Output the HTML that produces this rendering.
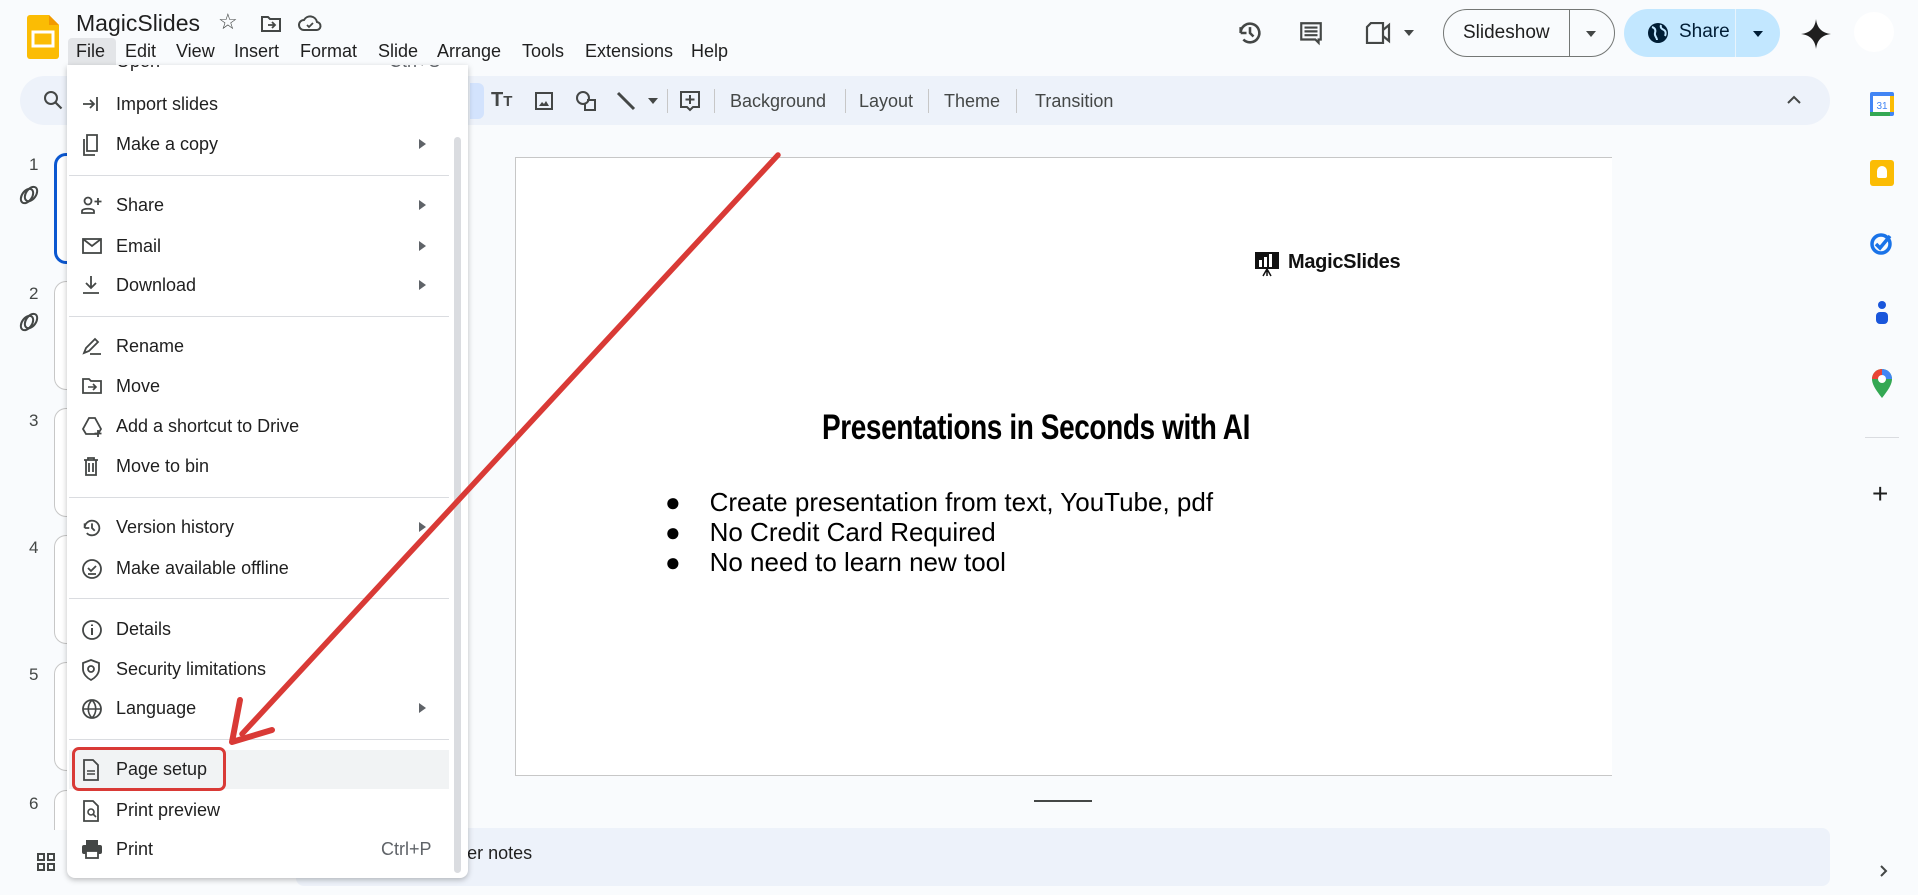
<!DOCTYPE html>
<html><head><meta charset="utf-8"><style>
*{margin:0;padding:0;box-sizing:border-box}
body{width:1918px;height:895px;overflow:hidden;background:#f9fbfd;font-family:"Liberation Sans",Arial,sans-serif;color:#1f1f1f;position:relative}
.a{position:absolute}
.mi{position:absolute;left:0;width:401px;height:40px;font-size:18px;line-height:40px}
.mi span.t{position:absolute;left:49px}
.mi svg{position:absolute;left:14px;top:10px}
.mi .ar{position:absolute;left:352px;top:15px;width:0;height:0;border-left:7px solid #5f6368;border-top:5px solid transparent;border-bottom:5px solid transparent}
.sep{position:absolute;left:2px;width:380px;height:1px;background:#dadce0}
.tb{font-size:18px;color:#444746;top:91px}
.vs{position:absolute;top:89px;width:1px;height:24px;background:#c7c7c7}
.num{font-size:17px;color:#444746;left:29px}
.th{position:absolute;left:54px;width:30px;border:1px solid #c7c7c7;border-right:none;border-radius:12px 0 0 12px;background:#fff}
.si{position:absolute;left:1870px}
.mb{position:absolute;top:41px;font-size:18px;white-space:nowrap}
</style></head><body>
<!-- logo -->
<svg class="a" style="left:27px;top:15px" width="32" height="44" viewBox="0 0 32 44"><path d="M0 3a3 3 0 0 1 3-3h19l10 10v31a3 3 0 0 1-3 3H3a3 3 0 0 1-3-3z" fill="#fbbc04"/><path d="M22 0l10 10H22z" fill="#f29900"/><rect x="6" y="17" width="20" height="14" fill="none" stroke="#fff" stroke-width="3"/></svg>
<div class="a" style="left:76px;top:10px;font-size:23px;color:#1f1f1f">MagicSlides</div>
<div class="a" style="left:218px;top:9px;font-size:22px;color:#444746">☆</div>
<svg class="a" style="left:260px;top:14px" width="22" height="20" viewBox="0 0 22 20"><path d="M2 3h6l2 2h10v12H2z" fill="none" stroke="#444746" stroke-width="2"/><path d="M8 11h6m-2-3l3 3-3 3" fill="none" stroke="#444746" stroke-width="1.8"/></svg>
<svg class="a" style="left:298px;top:14px" width="24" height="18" viewBox="0 0 24 18"><path d="M6 16a5 5 0 0 1 0-10 7 7 0 0 1 13 2 4 4 0 0 1-1 8z" fill="none" stroke="#444746" stroke-width="2"/><path d="M9 11l2 2 4-4" fill="none" stroke="#444746" stroke-width="1.8"/></svg>
<div class="a" style="left:68px;top:38px;width:48px;height:28px;background:#e3e5e8;border-radius:4px 4px 0 0"></div>
<div class="mb" style="left:76px">File</div>
<div class="mb" style="left:125px">Edit</div>
<div class="mb" style="left:176px">View</div>
<div class="mb" style="left:234px">Insert</div>
<div class="mb" style="left:300px">Format</div>
<div class="mb" style="left:378px">Slide</div>
<div class="mb" style="left:437px">Arrange</div>
<div class="mb" style="left:522px">Tools</div>
<div class="mb" style="left:585px">Extensions</div>
<div class="mb" style="left:691px">Help</div>

<!-- header right -->
<svg class="a" style="left:1236px;top:19px" width="28" height="28" viewBox="0 0 24 24"><path d="M4 12a8 8 0 1 1 2.3 5.6M4 12V7M4 12h5" fill="none" stroke="#444746" stroke-width="2.2"/><path d="M12 7v5l3 3" fill="none" stroke="#444746" stroke-width="2.2"/></svg>
<svg class="a" style="left:1298px;top:20px" width="26" height="26" viewBox="0 0 24 24"><path d="M3 3h18v15h-2v3l-3-3H3z" fill="none" stroke="#444746" stroke-width="2"/><path d="M6 7h12M6 10.5h12M6 14h12" stroke="#444746" stroke-width="2"/></svg>
<svg class="a" style="left:1365px;top:22px" width="30" height="22" viewBox="0 0 30 22"><path d="M2 5l4-4h12v20H2z" fill="none" stroke="#444746" stroke-width="2.2"/><path d="M18 8l6-5v16l-6-5" fill="none" stroke="#444746" stroke-width="2.2"/></svg>
<div class="a" style="left:1404px;top:30px;border-top:6px solid #444746;border-left:5px solid transparent;border-right:5px solid transparent"></div>
<div class="a" style="left:1443px;top:9px;width:172px;height:48px;border:1.5px solid #747775;border-radius:24px;background:#f9fbfd"></div>
<div class="a" style="left:1569px;top:10px;width:1px;height:46px;background:#747775"></div>
<div class="a" style="left:1463px;top:22px;font-size:19px;color:#1f1f1f">Slideshow</div>
<div class="a" style="left:1586px;top:31px;border-top:6px solid #444746;border-left:5px solid transparent;border-right:5px solid transparent"></div>
<div class="a" style="left:1624px;top:9px;width:156px;height:48px;border-radius:24px;background:#c2e7ff"></div>
<div class="a" style="left:1735px;top:9px;width:1px;height:48px;background:#e8f4fc"></div>
<svg class="a" style="left:1647px;top:22px" width="22" height="22" viewBox="0 0 22 22"><circle cx="11" cy="11" r="10" fill="#001d35"/><path d="M5 5c3 1 4 3 3 6s2 4 2 7M14 3c-1 3 1 4 3 5s2 4 1 6" fill="none" stroke="#c2e7ff" stroke-width="2"/></svg>
<div class="a" style="left:1679px;top:21px;font-size:19px;color:#001d35">Share</div>
<div class="a" style="left:1753px;top:31px;border-top:6px solid #001d35;border-left:5px solid transparent;border-right:5px solid transparent"></div>
<svg class="a" style="left:1801px;top:19px" width="30" height="30" viewBox="0 0 30 30"><path d="M15 0C16 9 21 14 30 15 21 16 16 21 15 30 14 21 9 16 0 15 9 14 14 9 15 0z" fill="#1f1f1f"/></svg>

<!-- toolbar -->
<div class="a" style="left:20px;top:76px;width:1810px;height:49px;border-radius:25px;background:#edf2fa"></div>
<svg class="a" style="left:43px;top:90px" width="22" height="22" viewBox="0 0 22 22"><circle cx="8" cy="8" r="6" fill="none" stroke="#444746" stroke-width="2"/><path d="M12.5 12.5l6 6" stroke="#444746" stroke-width="2.2"/></svg>
<div class="a" style="left:470px;top:83px;width:14px;height:36px;background:#d3e3fd;border-radius:0 6px 6px 0"></div>
<div class="a" style="left:491px;top:89px;font-size:20px;font-weight:bold;color:#444746">T<span style="font-size:15px">T</span></div>
<svg class="a" style="left:534px;top:91px" width="20" height="20" viewBox="0 0 20 20"><rect x="2" y="2" width="16" height="16" fill="none" stroke="#444746" stroke-width="2"/><path d="M5 15l3-4 2 2 2-3 3 5z" fill="#444746"/></svg>
<svg class="a" style="left:574px;top:89px" width="24" height="24" viewBox="0 0 24 24"><circle cx="9" cy="9" r="6" fill="none" stroke="#444746" stroke-width="2"/><path d="M13 11h8v10h-10v-6" fill="none" stroke="#444746" stroke-width="2"/></svg>
<svg class="a" style="left:615px;top:90px" width="22" height="22" viewBox="0 0 22 22"><path d="M3 3l16 16" stroke="#444746" stroke-width="3"/></svg>
<div class="a" style="left:648px;top:98px;border-top:6px solid #444746;border-left:5px solid transparent;border-right:5px solid transparent"></div>
<div class="vs" style="left:667px"></div>
<svg class="a" style="left:678px;top:89px" width="24" height="24" viewBox="0 0 24 24"><path d="M3 3h18v15h-6l-3 3-3-3H3z" fill="none" stroke="#444746" stroke-width="2"/><path d="M12 6v9M7.5 10.5h9" stroke="#444746" stroke-width="2"/></svg>
<div class="vs" style="left:714px"></div>
<div class="a tb" style="left:730px">Background</div>
<div class="vs" style="left:845px"></div>
<div class="a tb" style="left:859px">Layout</div>
<div class="vs" style="left:928px"></div>
<div class="a tb" style="left:944px">Theme</div>
<div class="vs" style="left:1016px"></div>
<div class="a tb" style="left:1035px">Transition</div>
<svg class="a" style="left:1786px;top:94px" width="16" height="12" viewBox="0 0 16 12"><path d="M2 9l6-6 6 6" fill="none" stroke="#444746" stroke-width="2"/></svg>

<!-- thumbnails -->
<div class="a num" style="top:155px">1</div>
<div class="a num" style="top:284px">2</div>
<div class="a num" style="top:411px">3</div>
<div class="a num" style="top:538px">4</div>
<div class="a num" style="top:665px">5</div>
<div class="a num" style="top:794px">6</div>
<div class="th" style="top:153px;height:111px;border:3px solid #0b57d0;border-right:none"></div>
<div class="th" style="top:281px;height:109px"></div>
<div class="th" style="top:408px;height:109px"></div>
<div class="th" style="top:535px;height:109px"></div>
<div class="th" style="top:662px;height:109px"></div>
<div class="th" style="top:790px;height:40px;border-bottom:none;border-radius:12px 0 0 0"></div>
<svg class="a" style="left:18px;top:184px" width="22" height="22" viewBox="0 0 22 22"><g fill="none" stroke="#444746" stroke-width="2"><ellipse cx="9" cy="12" rx="5" ry="8" transform="rotate(35 9 12)"/><ellipse cx="13" cy="10" rx="5" ry="8" transform="rotate(35 13 10)"/></g></svg>
<svg class="a" style="left:18px;top:311px" width="22" height="22" viewBox="0 0 22 22"><g fill="none" stroke="#444746" stroke-width="2"><ellipse cx="9" cy="12" rx="5" ry="8" transform="rotate(35 9 12)"/><ellipse cx="13" cy="10" rx="5" ry="8" transform="rotate(35 13 10)"/></g></svg>
<svg class="a" style="left:36px;top:852px" width="20" height="20" viewBox="0 0 20 20"><g fill="none" stroke="#444746" stroke-width="2"><rect x="2" y="2" width="6" height="6"/><rect x="12" y="2" width="6" height="6"/><rect x="2" y="12" width="6" height="6"/><rect x="12" y="12" width="6" height="6"/></g></svg>

<!-- slide -->
<div class="a" style="left:515px;top:157px;width:1097px;height:619px;background:#fff;border:1px solid #c7c7c7;border-right:none"></div>
<svg class="a" style="left:1254px;top:251px" width="26" height="26" viewBox="0 0 26 26"><rect x="1" y="1" width="24" height="17" fill="#111"/><rect x="5" y="9" width="3" height="7" fill="#fff"/><rect x="10" y="6" width="3" height="10" fill="#fff"/><rect x="15" y="3" width="3" height="13" fill="#fff"/><path d="M13 18v7M13 18l-4 7M13 18l4 7" stroke="#111" stroke-width="1.5"/></svg>
<div class="a" style="left:1288px;top:251px;font-size:20px;font-weight:bold;color:#111;letter-spacing:-0.3px">MagicSlides</div>
<div class="a" style="left:536px;top:408px;width:1000px;text-align:center;font-size:35px;font-weight:bold;color:#000;transform:scaleX(0.8);transform-origin:center;white-space:nowrap;letter-spacing:-0.5px">Presentations in Seconds with AI</div>
<div class="a" style="left:665px;top:487px;font-size:26px;line-height:30px;color:#000;white-space:nowrap">
<div>●&nbsp;&nbsp;&nbsp;&nbsp;Create presentation from text, YouTube, pdf</div>
<div>●&nbsp;&nbsp;&nbsp;&nbsp;No Credit Card Required</div>
<div>●&nbsp;&nbsp;&nbsp;&nbsp;No need to learn new tool</div></div>
<div class="a" style="left:1034px;top:800px;width:58px;height:2px;background:#444746"></div>

<!-- notes -->
<div class="a" style="left:296px;top:828px;width:1534px;height:58px;background:#edf2fa;border-radius:8px"></div>
<div class="a" style="left:320px;top:843px;font-size:18px;color:#1f1f1f">Click to add speaker notes</div>

<!-- right sidebar -->
<div class="a" style="left:1868px;top:0;width:50px;height:895px;background:#f9fbfd"></div>
<div class="a" style="left:1854px;top:12px;width:40px;height:40px;border-radius:50%;background:#fff"></div>
<svg class="si" style="top:92px" width="24" height="24" viewBox="0 0 24 24"><rect x="0" y="0" width="24" height="24" rx="2" fill="#4285f4"/><rect x="3" y="4" width="18" height="16" fill="#fff"/><rect x="0" y="20" width="20" height="4" fill="#34a853"/><rect x="20" y="4" width="4" height="16" fill="#fbbc04"/><text x="12" y="17" font-size="10" text-anchor="middle" fill="#4285f4" font-family="Liberation Sans">31</text></svg>
<div class="si" style="top:160px;width:24px;height:26px;background:#fbbc04;border-radius:3px"><div style="margin:6px auto 0;width:10px;height:12px;background:#fff;border-radius:5px 5px 2px 2px"></div></div>
<svg class="si" style="top:231px" width="24" height="24" viewBox="0 0 24 24"><circle cx="11" cy="13" r="9" fill="none" stroke="#1a73e8" stroke-width="3.5"/><path d="M6 13l4 4 10-12" fill="none" stroke="#1a73e8" stroke-width="3.5"/></svg>
<svg class="si" style="top:300px" width="24" height="28" viewBox="0 0 24 28"><circle cx="12" cy="5" r="4" fill="#1a56db"/><rect x="6" y="12" width="12" height="12" rx="4" fill="#1a56db"/></svg>
<svg class="si" style="top:369px" width="24" height="30" viewBox="0 0 24 30"><path d="M12 29C5 20 2 15 2 10a10 10 0 0 1 20 0c0 5-3 10-10 19z" fill="#34a853"/><path d="M2 10a10 10 0 0 1 10-10v10z" fill="#ea4335"/><path d="M12 0a10 10 0 0 1 10 10H12z" fill="#4285f4"/><circle cx="12" cy="10" r="4" fill="#fff"/></svg>
<div class="a" style="left:1865px;top:437px;width:34px;height:1px;background:#dadce0"></div>
<div class="a" style="left:1872px;top:478px;font-size:28px;color:#1f1f1f">+</div>
<svg class="a" style="left:1878px;top:864px" width="12" height="14" viewBox="0 0 12 14"><path d="M3 2l5 5-5 5" fill="none" stroke="#444746" stroke-width="2"/></svg>

<!-- menu -->
<div class="a" style="left:67px;top:65px;width:401px;height:813px;background:#fff;border-radius:0 0 8px 8px;box-shadow:0 2px 6px rgba(0,0,0,.25);overflow:hidden">
<div class="mi" style="top:-24px"><span class="t">Open</span><span style="position:absolute;left:322px;color:#5f6368">Ctrl+O</span></div>
<div class="mi" style="top:19px"><svg width="20" height="20" viewBox="0 0 20 20"><path d="M2 10h10m-3-4l4 4-4 4M16 3v14" fill="none" stroke="#444746" stroke-width="1.8"/></svg><span class="t">Import slides</span></div>
<div class="mi" style="top:59px"><svg width="20" height="22" viewBox="0 0 20 22"><path d="M6 1h10v16H6zM3 5v16h11" fill="none" stroke="#444746" stroke-width="1.8"/></svg><span class="t">Make a copy</span><i class="ar"></i></div>
<div class="sep" style="top:110px"></div>
<div class="mi" style="top:120px"><svg width="22" height="20" viewBox="0 0 22 20"><circle cx="7" cy="6" r="3.5" fill="none" stroke="#444746" stroke-width="1.8"/><path d="M1 18v-2c0-3 12-3 12 0v2zM17 3v7M13.5 6.5h7" fill="none" stroke="#444746" stroke-width="1.8"/></svg><span class="t">Share</span><i class="ar"></i></div>
<div class="mi" style="top:161px"><svg width="22" height="20" viewBox="0 0 22 20"><rect x="2" y="3" width="18" height="14" fill="none" stroke="#444746" stroke-width="1.8"/><path d="M2 3l9 7 9-7" fill="none" stroke="#444746" stroke-width="1.8"/></svg><span class="t">Email</span><i class="ar"></i></div>
<div class="mi" style="top:200px"><svg width="20" height="20" viewBox="0 0 20 20"><path d="M10 1v12m-5-5l5 5 5-5M2 18h16" fill="none" stroke="#444746" stroke-width="1.8"/></svg><span class="t">Download</span><i class="ar"></i></div>
<div class="sep" style="top:251px"></div>
<div class="mi" style="top:261px"><svg width="22" height="20" viewBox="0 0 22 20"><path d="M3 17l2-5 9-9 3 3-9 9zM9 18h11" fill="none" stroke="#444746" stroke-width="1.8"/></svg><span class="t">Rename</span></div>
<div class="mi" style="top:301px"><svg width="22" height="20" viewBox="0 0 22 20"><path d="M2 3h6l2 2h10v12H2z" fill="none" stroke="#444746" stroke-width="1.8"/><path d="M7 11h7m-2-3l3 3-3 3" fill="none" stroke="#444746" stroke-width="1.6"/></svg><span class="t">Move</span></div>
<div class="mi" style="top:341px"><svg width="22" height="22" viewBox="0 0 22 22"><path d="M8 2h6l6 11-3 5H5L2 13z" fill="none" stroke="#444746" stroke-width="1.8"/><path d="M17 14v7M13.5 17.5h7" stroke="#444746" stroke-width="1.8"/></svg><span class="t">Add a shortcut to Drive</span></div>
<div class="mi" style="top:381px"><svg width="20" height="20" viewBox="0 0 20 20"><path d="M3 4h14M7 4V2h6v2M5 4v15h10V4M8 7v9M12 7v9" fill="none" stroke="#444746" stroke-width="1.8"/></svg><span class="t">Move to bin</span></div>
<div class="sep" style="top:432px"></div>
<div class="mi" style="top:442px"><svg width="22" height="22" viewBox="0 0 24 24"><path d="M4 12a8 8 0 1 1 2.3 5.6M4 12V7M4 12h5M12 7v5l3 3" fill="none" stroke="#444746" stroke-width="2"/></svg><span class="t">Version history</span><i class="ar"></i></div>
<div class="mi" style="top:483px"><svg width="22" height="22" viewBox="0 0 22 22"><circle cx="11" cy="11" r="9" fill="none" stroke="#444746" stroke-width="1.8"/><path d="M7 10l3 3 5-5M7 16h8" fill="none" stroke="#444746" stroke-width="1.8"/></svg><span class="t">Make available offline</span></div>
<div class="sep" style="top:533px"></div>
<div class="mi" style="top:544px"><svg width="22" height="22" viewBox="0 0 22 22"><circle cx="11" cy="11" r="9" fill="none" stroke="#444746" stroke-width="1.8"/><path d="M11 9v7M11 5.5v1.5" stroke="#444746" stroke-width="2"/></svg><span class="t">Details</span></div>
<div class="mi" style="top:584px"><svg width="20" height="22" viewBox="0 0 20 22"><path d="M10 1l8 3v6c0 5-4 9-8 11-4-2-8-6-8-11V4z" fill="none" stroke="#444746" stroke-width="1.8"/><circle cx="10" cy="10" r="3" fill="none" stroke="#444746" stroke-width="1.8"/></svg><span class="t">Security limitations</span></div>
<div class="mi" style="top:623px"><svg width="22" height="22" viewBox="0 0 22 22"><circle cx="11" cy="11" r="9" fill="none" stroke="#444746" stroke-width="1.8"/><path d="M2 11h18M11 2c-5 5-5 13 0 18M11 2c5 5 5 13 0 18" fill="none" stroke="#444746" stroke-width="1.6"/></svg><span class="t">Language</span><i class="ar"></i></div>
<div class="sep" style="top:674px"></div>
<div class="a" style="left:2px;top:685px;width:380px;height:39px;background:#f1f3f4"></div>
<div class="mi" style="top:684px"><svg width="20" height="22" viewBox="0 0 20 22"><path d="M3 1h9l5 5v15H3z" fill="none" stroke="#444746" stroke-width="1.8"/><path d="M6 12h8M6 15h8" stroke="#444746" stroke-width="1.6"/></svg><span class="t">Page setup</span></div>
<div class="mi" style="top:725px"><svg width="20" height="22" viewBox="0 0 20 22"><path d="M3 1h9l5 5v15H3z" fill="none" stroke="#444746" stroke-width="1.8"/><circle cx="10" cy="12" r="3" fill="none" stroke="#444746" stroke-width="1.6"/><path d="M12 14l3 3" stroke="#444746" stroke-width="1.6"/></svg><span class="t">Print preview</span></div>
<div class="mi" style="top:764px"><svg width="22" height="20" viewBox="0 0 22 20"><path d="M5 1h12v5H5z" fill="#444746"/><rect x="1" y="6" width="20" height="9" rx="2" fill="#444746"/><rect x="5" y="12" width="12" height="7" fill="#fff" stroke="#444746" stroke-width="1.8"/></svg><span class="t">Print</span><span style="position:absolute;left:314px;color:#5f6368">Ctrl+P</span></div>
<div class="a" style="left:387px;top:72px;width:7px;height:736px;background:#dadce0;border-radius:4px"></div>
</div>

<!-- red highlight box and arrow -->
<div class="a" style="left:72px;top:747px;width:154px;height:44px;border:3.5px solid #d93a36;border-radius:7px"></div>
<svg class="a" style="left:0;top:0" width="1918" height="895" viewBox="0 0 1918 895"><path d="M778 155L242 734" stroke="#d93a36" stroke-width="5.5" stroke-linecap="round"/><path d="M232 742l8-42M232 742l40-12" stroke="#d93a36" stroke-width="6" stroke-linecap="round" fill="none"/></svg>
</body></html>
